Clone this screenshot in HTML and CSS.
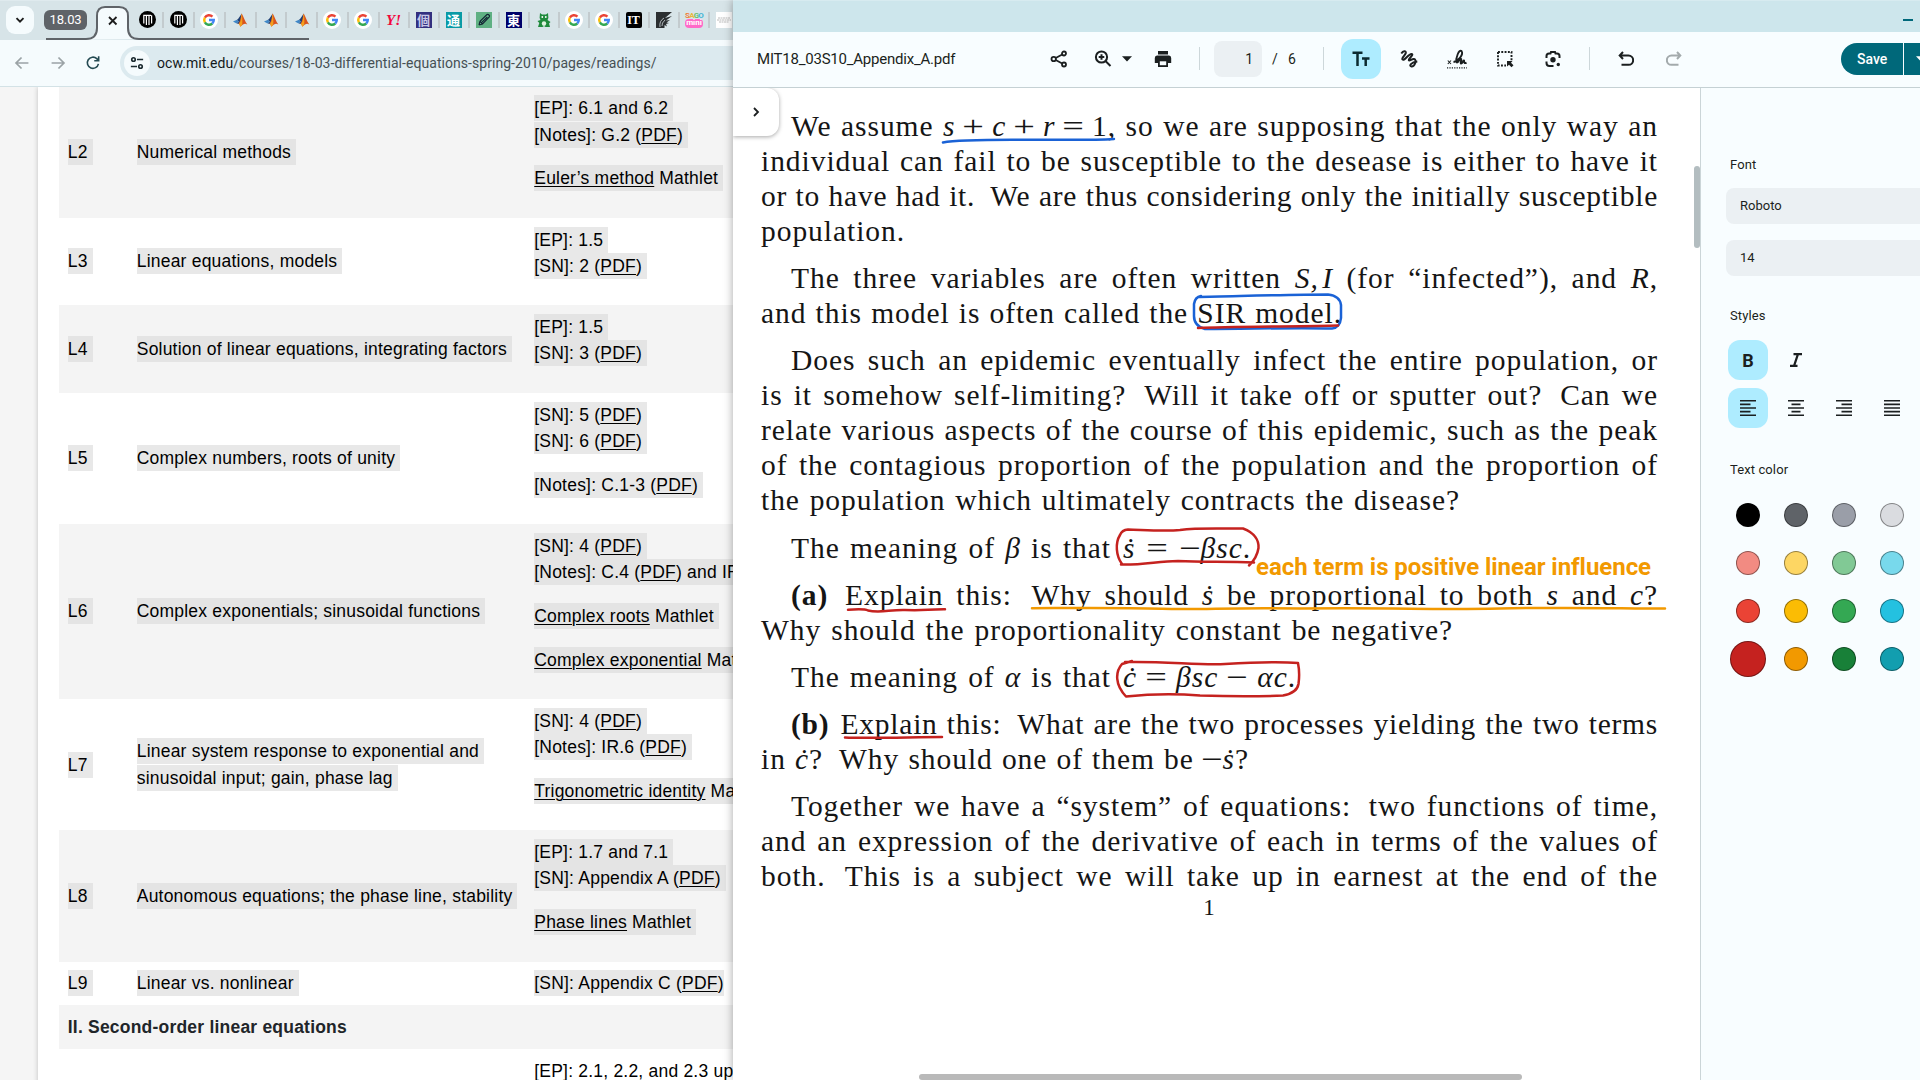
FILE: index.html
```html
<!DOCTYPE html>
<html lang="en">
<head>
<meta charset="utf-8">
<title>MIT18_03S10_Appendix_A.pdf</title>
<link rel="stylesheet" href="styles.css">
</head>
<body>
<svg class="defs" aria-hidden="true">
  <symbol id="google" viewBox="0 0 20 20"><circle cx="10" cy="10" r="10" fill="#fff"/><g fill="none" stroke-width="2.7"><path d="M5.4 7.4A5.3 5.3 0 0 1 13.8 6.3" stroke="#ea4335"/><path d="M5.4 12.6A5.3 5.3 0 0 1 5.4 7.4" stroke="#fbbc05"/><path d="M13.6 13.9A5.3 5.3 0 0 1 5.4 12.6" stroke="#34a853"/><path d="M10 10H15.3A5.3 5.3 0 0 1 13.6 13.9" stroke="#4285f4"/></g></symbol>
  <symbol id="matlab" viewBox="0 0 16 16"><path d="M1 9.5L5 7.8L7 9.8L4.5 11.5Z" fill="#3f87c7"/><path d="M5 7.8C6.5 7 7.5 4.5 9.7 1.5L9 9L6.5 12L4.7 11.3L7 9.8Z" fill="#1f3f73"/><path d="M9.7 1.5C11.5 4.5 13 9.5 15.3 12.5C13 11 11.5 11.5 8.3 14.8C8 13 7.4 12 6.5 11.5C8.5 9.5 8.5 5 9.7 1.5Z" fill="#d9541e"/><path d="M9.7 1.5C10.4 5 10.5 9 10.2 12.8L8.3 14.8L7 12C9 10 9.2 5 9.7 1.5Z" fill="#f3a01c"/></symbol>
  <symbol id="ocw" viewBox="0 0 17 17"><circle cx="8.5" cy="8.5" r="8.5" fill="#000"/><path d="M4.8 12.500V4.200M7.400 4.200V14M10 4.200V14M12.600 12.500V4.200M4.200 4.300H12" stroke="#fff" stroke-width="1.200" fill="none"/></symbol>
</svg>

<main class="desktop">
  <section class="browser">
    <header class="tabstrip">
      <button class="tab-search"><svg viewBox="0 0 12 12" width="12" height="12"><path d="M2.5 4.2L6 7.7L9.5 4.2" fill="none" stroke="#1d1d1d" stroke-width="1.9"/></svg></button>
      <span class="group">18.03</span>
      <div class="active-tab">
        <svg viewBox="0 0 274 34" width="274" height="34"><path d="M12 34C18 33 50 36 53 32C59 30 59 25 59 20V10Q59 1 67 1H81Q90 1 90 10V20C90 28 93 33 101 33Z" fill="#f5fbfd"/><path d="M8 33H48Q59 33 59 22V10Q59 1 67 1H81Q90 1 90 10V22Q90 33 101 33H271" fill="none" stroke="#5f6368" stroke-width="2"/><path d="M71 11L78.5 18.5M78.5 11L71 18.500" stroke="#1d1d1d" stroke-width="1.8"/></svg>
      </div>
      <div class="tabs">
        <i class="tab wide"><svg width="17" height="17"><use href="#ocw"/></svg></i>
        <i class="tab wide"><svg width="17" height="17"><use href="#ocw"/></svg></i>
        <i class="tab wide"><svg width="18" height="18"><use href="#google"/></svg></i>
        <i class="tab wide"><svg width="16" height="16"><use href="#matlab"/></svg></i>
        <i class="tab wide"><svg width="16" height="16"><use href="#matlab"/></svg></i>
        <i class="tab wide"><svg width="16" height="16"><use href="#matlab"/></svg></i>
        <i class="tab wide"><svg width="18" height="18"><use href="#google"/></svg></i>
        <i class="tab wide"><svg width="18" height="18"><use href="#google"/></svg></i>
        <i class="tab"><b class="yahoo">Y!</b></i>
        <i class="tab"><b class="fav indigo">個</b></i>
        <i class="tab"><b class="fav teal">通</b></i>
        <i class="tab"><svg viewBox="0 0 16 16" width="16" height="16"><rect width="16" height="16" fill="#5fb083"/><path d="M3 13L4 9.3L11 2.5Q12 2 13 3Q14 4 13.3 5L6.5 12L3 13M4 9.3L6.5 12M5.5 10.7L11.3 5" fill="none" stroke="#123" stroke-width="1.1"/></svg></i>
        <i class="tab"><b class="fav navy">東</b></i>
        <i class="tab"><svg viewBox="0 0 16 16" width="16" height="16"><path d="M4 1L6 2.5H10L12 1L12.4 6L11.5 8L14.5 10L13 11.5L14 15H9.5L8 14L6.5 15H2L3.3 11L1.5 9L4.5 8L3.6 6Z" fill="#1f8a3c"/><circle cx="6.3" cy="5" r=".9" fill="#fff"/><circle cx="9.8" cy="5" r=".9" fill="#fff"/><ellipse cx="8" cy="11.6" rx="2.2" ry="2.4" fill="#dff3e0"/></svg></i>
        <i class="tab"><svg width="18" height="18"><use href="#google"/></svg></i>
        <i class="tab"><svg width="18" height="18"><use href="#google"/></svg></i>
        <i class="tab"><b class="fav it">IT</b></i>
        <i class="tab"><svg viewBox="0 0 16 16" width="16" height="16"><path d="M0 0H16L9 6L16 4L10 8.5L14 8L10.5 10.5L13 11L10 12L11 14.5L8.5 13V16H0Z" fill="#2b2f31"/><path d="M4 15Q3 9 8 6M6 14Q5.500 11 9 8" stroke="#cfd8dc" stroke-width=".8" fill="none"/></svg></i>
        <i class="tab"><b class="sago"><span><em class="o">S</em><em class="y">A</em><em class="g">G</em><em class="b">O</em></span><span class="mini">mini</span></b></i>
        <i class="tab"><svg viewBox="0 0 16 16" width="16" height="16"><rect width="16" height="16" fill="#fff"/><path d="M2 6H14M1 8H15M3 10H13" stroke="#bbb" stroke-width="1" stroke-dasharray="2 .5"/></svg></i>
      </div>
    </header>
    <nav class="navbar">
      <svg viewBox="0 0 24 24" width="22" height="22" class="dim"><path d="M19 12H6M11.500 6L5.500 12L11.500 18"/></svg>
      <svg viewBox="0 0 24 24" width="22" height="22" class="dim"><path d="M5 12H18M12.500 6L18.500 12L12.500 18"/></svg>
      <svg viewBox="0 0 24 24" width="20" height="20" class="reload"><path d="M18.500 13A6.700 6.700 0 1 1 16.500 6.800L18.500 8.800M18.800 4V9.200H13.500"/></svg>
      <div class="omnibox">
        <span class="site"><svg viewBox="0 0 16 16" width="14" height="14" fill="none" stroke="#1c2b30"><circle cx="4" cy="4" r="2"/><path d="M8 4H15M1 12H8"/><circle cx="12" cy="12" r="2"/></svg></span>
        <span class="url"><b>ocw.mit.edu</b>/courses/18-03-differential-equations-spring-2010/pages/readings/</span>
      </div>
    </nav>
    <div class="page">
      <div class="sheet">
        <div class="row odd"><div><mark>L2 </mark></div><div><mark>Numerical methods </mark></div><div><p><mark>[EP]: 6.1 and 6.2 </mark><br><mark>[Notes]: G.2 (<a>PDF</a>) </mark></p><p><mark><a>Euler’s method</a> Mathlet </mark></p></div></div>
        <div class="row"><div><mark>L3 </mark></div><div><mark>Linear equations, models </mark></div><div><p><mark>[EP]: 1.5 </mark><br><mark>[SN]: 2 (<a>PDF</a>) </mark></p></div></div>
        <div class="row odd"><div><mark>L4 </mark></div><div><mark>Solution of linear equations, integrating factors </mark></div><div><p><mark>[EP]: 1.5 </mark><br><mark>[SN]: 3 (<a>PDF</a>) </mark></p></div></div>
        <div class="row"><div><mark>L5 </mark></div><div><mark>Complex numbers, roots of unity </mark></div><div><p><mark>[SN]: 5 (<a>PDF</a>) </mark><br><mark>[SN]: 6 (<a>PDF</a>) </mark></p><p><mark>[Notes]: C.1-3 (<a>PDF</a>) </mark></p></div></div>
        <div class="row odd"><div><mark>L6 </mark></div><div><mark>Complex exponentials; sinusoidal functions </mark></div><div><p><mark>[SN]: 4 (<a>PDF</a>) </mark><br><mark>[Notes]: C.4 (<a>PDF</a>) and IR</mark></p><p><mark><a>Complex roots</a> Mathlet </mark></p><p><mark><a>Complex exponential</a> Mathlet </mark></p></div></div>
        <div class="row"><div><mark>L7 </mark></div><div><mark>Linear system response to exponential and </mark><br><mark>sinusoidal input; gain, phase lag </mark></div><div><p><mark>[SN]: 4 (<a>PDF</a>) </mark><br><mark>[Notes]: IR.6 (<a>PDF</a>) </mark></p><p><mark><a>Trigonometric identity</a> Mathlet </mark></p></div></div>
        <div class="row odd"><div><mark>L8 </mark></div><div><mark>Autonomous equations; the phase line, stability </mark></div><div><p><mark>[EP]: 1.7 and 7.1 </mark><br><mark>[SN]: Appendix A (<a>PDF</a>) </mark></p><p><mark><a>Phase lines</a> Mathlet </mark></p></div></div>
        <div class="row"><div><mark>L9 </mark></div><div><mark>Linear vs. nonlinear </mark></div><div><mark>[SN]: Appendix C (<a>PDF</a>)</mark></div></div>
        <div class="row odd heading"><div>II. Second-order linear equations</div></div>
        <div class="row"><div></div><div></div><div><p>[EP]: 2.1, 2.2, and 2.3 up</p></div></div>
      </div>
    </div>
  </section>

  <section class="viewer">
    <div class="titlebar"><span class="minimise"></span></div>
    <header class="toolbar">
      <span class="filename">MIT18_03S10_Appendix_A.pdf</span>
      <div class="tools">
        <svg class="t-share" viewBox="0 0 18 18" width="18" height="18" fill="none" stroke="#1b1f20" stroke-width="1.800"><circle cx="14" cy="3.500" r="2"/><circle cx="14" cy="14.500" r="2"/><circle cx="3.700" cy="9" r="2.200"/><path d="M5.700 8L12.200 4.500M5.700 10L12.200 13.500"/></svg>
        <svg class="t-zoom" viewBox="0 0 18 18" width="18" height="18" fill="none" stroke="#1b1f20" stroke-width="2"><circle cx="7.500" cy="7" r="5.600"/><path d="M11.700 11.200L16.500 16M4.700 7H10.300M7.500 4.200V9.800"/></svg>
        <svg class="t-caret" viewBox="0 0 10 6" width="10" height="6"><path d="M0 .3H10L5 5.500Z" fill="#1b1f20"/></svg>
        <svg class="t-print" viewBox="0 0 18 18" width="18" height="18"><path d="M4 1H14V4.500H4ZM3 5.500H15Q17.200 5.500 17.200 8V13H14V17H4V13H.8V8Q.8 5.500 3 5.500Z" fill="#1b1f20"/><path d="M5.800 11.300H12.200V15.200H5.800Z" fill="#f8fdff"/></svg>
        <span class="rule t-r1"></span>
        <span class="pageno">1</span><span class="slash">/</span><span class="total">6</span>
        <span class="rule t-r2"></span>
        <span class="chip t-text"><svg viewBox="0 0 18 16" width="18" height="16"><path d="M.5 1.800H10.500M5.500 1.800V15M10 7.500H17.500M13.700 7.500V15" fill="none" stroke="#0b2a31" stroke-width="2.500"/></svg></span>
        <svg class="t-draw" viewBox="0 0 18 18" width="18" height="18" fill="none" stroke="#1b1f20" stroke-width="2"><path d="M1.300 3.500C3 1 6.300 .3 5.800 3C5.200 5.500 1.500 7.500 2.400 9.300C4.500 11.500 8 4 11.500 4C14.500 4.500 8.300 8.600 8.800 10.200C9.500 11.500 12 8.600 14 9C17.500 10 14.500 16.800 11.500 16.600C8.500 16 11 12.300 17.300 11.600"/></svg>
        <svg class="t-sign" viewBox="0 0 20 20" width="20" height="20" fill="none" stroke="#1b1f20"><path d="M.8 11.500L4 15M4 11.500L.8 15" stroke-width="1.100"/><path d="M6.500 13C11 12.500 17 5.500 14.500 2C12 0 8.500 9 9.500 13C10.500 15.500 13 8.500 14.200 10C14.800 11.500 12.800 14.500 14.200 14.600C16 14.500 16 10.500 17 11.500C17 13.500 17.500 14.800 19.500 13.600" stroke-width="1.900"/><path d="M0 18.800H20" stroke-width="1.200" stroke-dasharray="1.200 1.200"/></svg>
        <svg class="t-select" viewBox="0 0 18 18" width="18" height="18"><path d="M2 2H15.500V11M2 2V15.500H10" fill="none" stroke="#1b1f20" stroke-width="1.900" stroke-dasharray="1.900 1.400"/><path d="M11 11H16.500L15 12.700L17.500 15.200L15.500 17.200L13 14.700L11 16.500Z" fill="#1b1f20"/></svg>
        <svg class="t-lens" viewBox="0 0 18 18" width="18" height="18" fill="none" stroke="#1b1f20" stroke-width="2"><path d="M2.500 8V6Q2.500 3.500 5 3.500H6.500L7 2H11L11.500 3.500H13Q15.500 3.500 15.500 6V8M2.500 11.500V13Q2.500 16 5.500 16H9.500"/><circle cx="9" cy="9.800" r="2.700" fill="#1b1f20" stroke="none"/><circle cx="14.300" cy="14.500" r="1.700" fill="#1b1f20" stroke="none"/></svg>
        <span class="rule t-r3"></span>
        <svg class="t-undo" viewBox="0 0 16 16" width="16" height="16" fill="none" stroke="#1b1f20" stroke-width="2"><path d="M5 1L1.700 4.500L5 8M2 4.500H10.500A4.400 4.400 0 0 1 10.500 13.800H3.500"/></svg>
        <svg class="t-redo" viewBox="0 0 16 16" width="16" height="16" fill="none" stroke="#a3aaac" stroke-width="2"><path d="M11 1L14.300 4.500L11 8M14 4.500H5.500A4.400 4.400 0 0 0 5.500 13.800H12.500"/></svg>
        <span class="save">Save</span><span class="save-more"><svg viewBox="0 0 10 6" width="10" height="6"><path d="M0 .3H10L5 5.500Z" fill="#fff"/></svg></span>
      </div>
    </header>
    <div class="body">
      <div class="document">
        <article class="pdf">
          <div class="para">
            <div class="ln first">We assume <span class="fit w172"><i>s</i> <s>+</s> <i>c</i> <s>+</s> <i>r</i> <s>=</s> 1,</span> so we are supposing that the only way an</div>
            <div class="ln">individual can fail to be susceptible to the desease is either to have it</div>
            <div class="ln tight">or to have had it. &#8201;We are thus considering only the initially susceptible</div>
            <div class="ln"><span class="fit w144">population.</span></div>
          </div>
          <div class="para">
            <div class="ln first">The three variables are often written <i>S,&#8202;I</i> (for “infected”), and <i>R</i>,</div>
            <div class="ln"><span class="fit w579">and this model is often called the SIR model.</span></div>
          </div>
          <div class="para">
            <div class="ln first">Does such an epidemic eventually infect the entire population, or</div>
            <div class="ln">is it somehow self-limiting? &#8201;Will it take off or sputter out? &#8201;Can we</div>
            <div class="ln">relate various aspects of the course of this epidemic, such as the peak</div>
            <div class="ln">of the contagious proportion of the population and the proportion of</div>
            <div class="ln"><span class="fit w698">the population which ultimately contracts the disease?</span></div>
          </div>
          <div class="para">
            <div class="ln first left"><span class="fit w319">The meaning of <i>β</i> is that</span><span class="fit eq w127"><i>ṡ</i> <s>=</s> <s>−</s><i>βsc</i>.</span></div>
          </div>
          <div class="para">
            <div class="ln first"><b>(a)</b> Explain this: &#8201;Why should <i>ṡ</i> be proportional to both <i>s</i> and <i>c</i>?</div>
            <div class="ln"><span class="fit w691">Why should the proportionality constant be negative?</span></div>
          </div>
          <div class="para">
            <div class="ln first left"><span class="fit w319">The meaning of <i>α</i> is that</span><span class="fit eq w172"><i>ċ</i> <s>=</s> <i>βsc</i> <s>−</s> <i>αc</i>.</span></div>
          </div>
          <div class="para">
            <div class="ln first tight"><b>(b)</b> Explain this: &#8201;What are the two processes yielding the two terms</div>
            <div class="ln"><span class="fit w488">in <i>ċ</i>? &#8201;Why should one of them be <s>−</s><i>ṡ</i>?</span></div>
          </div>
          <div class="para">
            <div class="ln first">Together we have a “system” of equations: &#8201;two functions of time,</div>
            <div class="ln">and an expression of the derivative of each in terms of the values of</div>
            <div class="ln">both. &#8201;This is a subject we will take up in earnest at the end of the</div>
          </div>
          <div class="folio">1</div>
        </article>
        <svg class="ink" viewBox="733 88 967 992" width="967" height="992">
          <g fill="none" stroke-width="2.500" stroke-linecap="round" stroke-linejoin="round">
            <path stroke="#1a62d6" d="M943 142.500C960 139.500 1000 140 1027 139.800S1090 140.500 1114 139"/>
            <path stroke="#1a62d6" d="M1199 297C1230 296.500 1290 294.500 1328 294.500Q1340 296 1341 305V318Q1340 328 1332 328.500C1290 327.500 1250 329 1205 329Q1194 326 1194 316V304Q1195 297 1201 296"/>
            <path stroke="#c5221f" d="M1198 328C1230 326.500 1310 326.500 1338 325.500"/>
            <path stroke="#c5221f" d="M1121 564.500C1145 565 1158 561 1178 561C1205 562.500 1225 561 1254 562.500M1122 564C1116 556 1115 543 1120 535Q1122 530 1128 529.500C1145 530 1165 531.500 1180 530C1200 527.500 1225 529 1243 528.500C1255 533 1259 541 1258.500 548Q1257 558 1249 565.500"/>
            <path stroke="#c5221f" d="M848 609.800C858 609 864 608.500 868 610.500C880 613.500 890 609.500 905 610S930 610 945 609.300"/>
            <path stroke="#f29900" d="M1032 608.200C1080 608 1120 607.500 1162 608.800S1230 607 1300 608.500C1400 607.500 1430 610 1500 608.500S1620 608.500 1665 608.500"/>
            <path stroke="#c5221f" d="M1132 661L1122 664C1115 672 1115 685 1126 696.500C1145 694.500 1175 693.500 1200 695.500C1230 696.500 1260 696.500 1283 695.500Q1297 693 1298.500 684Q1300 673 1298 663C1280 661.500 1250 662.500 1225 664S1165 661 1125 662"/>
            <path stroke="#c5221f" d="M845 737.500C870 738.500 915 737 942 737"/>
          </g>
        </svg>
        <div class="note">each term is positive linear influence</div>
        <button class="expand"><svg viewBox="0 0 12 12" width="12" height="12"><path d="M4 2L8 6L4 10" fill="none" stroke="#1b1f20" stroke-width="1.800"/></svg></button>
        <span class="vbar"></span><span class="hbar"></span>
      </div>
      <aside class="side">
        <h4>Font</h4>
        <div class="select">Roboto</div>
        <div class="select second">14</div>
        <h4 class="h-styles">Styles</h4>
        <div class="btns">
          <span class="chip"><b>B</b></span><span class="chip off"><svg viewBox="0 0 14 14" width="14" height="14"><path d="M4.500 1.200H13M1 12.800H8.500M9 1L5 13" fill="none" stroke="#1b1f20" stroke-width="2.300"/></svg></span>
        </div>
        <div class="btns second">
          <span class="chip"><svg viewBox="0 0 16 16" width="16" height="16"><path d="M0 .8H16M0 4.400H10.500M0 8H16M0 11.600H10.500M0 15.200H16"/></svg></span>
          <span class="chip off"><svg viewBox="0 0 16 16" width="16" height="16"><path d="M0 .8H16M3.500 4.400H12.500M0 8H16M3.500 11.600H12.500M0 15.200H16"/></svg></span>
          <span class="chip off"><svg viewBox="0 0 16 16" width="16" height="16"><path d="M0 .8H16M5.500 4.400H16M0 8H16M5.500 11.600H16M0 15.200H16"/></svg></span>
          <span class="chip off"><svg viewBox="0 0 16 16" width="16" height="16"><path d="M0 .8H16M0 4.400H16M0 8H16M0 11.600H16M0 15.200H16"/></svg></span>
        </div>
        <h4 class="h-color">Text color</h4>
        <div class="swatches">
          <i style="background:#000"></i><i style="background:#5f6368"></i><i style="background:#9a9ea8"></i><i style="background:#dadce0"></i>
          <i style="background:#f28b82"></i><i style="background:#fdd663"></i><i style="background:#81c995"></i><i style="background:#78d9ec"></i>
          <i style="background:#ea4335"></i><i style="background:#fbbc04"></i><i style="background:#34a853"></i><i style="background:#24c1e0"></i>
          <i class="sel" style="background:#c5221f"></i><i style="background:#f29900"></i><i style="background:#188038"></i><i style="background:#129eaf"></i>
        </div>
      </aside>
    </div>
  </section>
</main>
</body>
</html>
```
FILE: styles.css
```css
* { box-sizing: border-box; }
body { margin: 0; overflow: hidden; font-family: Roboto, sans-serif; color: #1b1f20; }
button { border: 0; padding: 0; }
svg { display: block; flex: none; }
.defs { display: none; }
.desktop { display: grid; grid-template-columns: 733px 1187px; height: 1080px; width: 1920px; overflow: hidden; }

/* background browser */
.browser { overflow: hidden; display: flex; flex-direction: column; min-width: 0; }
.tabstrip { height: 40px; flex: none; display: flex; background: #d7e4e8; padding: 0 0 0 6px; border-top: 1px solid #dfeaee; position: relative; }
.tab-search { flex: none; width: 28px; height: 28px; margin-top: 5px; border-radius: 9px; background: #f5fbfd; display: grid; place-items: center; }
.group { flex: none; margin: 9px 0 0 10px; width: 43px; height: 20px; border-radius: 6px; background: #5f6368; color: #fff; font-size: 13px; letter-spacing: -.1px; line-height: 20px; text-align: center; z-index: 1; }
.active-tab { position: absolute; left: 38px; top: 5px; }
.tabs { flex: none; display: flex; margin-left: 45.500px; height: 38px; padding-top: 4px; z-index: 1; }
.tab { flex: none; width: 30px; height: 29px; display: grid; place-items: center; position: relative; font-style: normal; }
.tab.wide { width: 30.750px; }
.tab::after { content: ""; position: absolute; right: -1px; top: 7px; width: 2px; height: 16px; background: #c3cbce; }
.fav { width: 16px; height: 16px; color: #fff; font: 700 13px/16px "Noto Sans CJK JP", sans-serif; text-align: center; }
.indigo { background: #33307f; color: #c7c6e6; }
.teal { background: #0a9aa5; }
.navy { background: #00006a; }
.it { background: #000; font: 700 12px/16px "Liberation Serif", serif; border-radius: 2px; }
.yahoo { color: #f2083c; font: italic 700 15px/16px "Liberation Serif", serif; }
.sago { width: 17px; height: 17px; font: 700 8px/9px Roboto, sans-serif; letter-spacing: -.8px; text-align: center; display: grid; grid-template-rows: 8px 9px; }
.sago em { font-style: normal; }
.o { color: #f0803c; } .y { color: #e9b93a; } .g { color: #6bbf6a; } .b { color: #45b5d6; }
.mini { background: #ff69c8; color: #fff; border-radius: 4px; letter-spacing: 0; line-height: 8px; height: 9px; }

.navbar { height: 47px; flex: none; display: flex; align-items: center; background: #f5fbfd; border-bottom: 1px solid #d3e2e6; padding-left: 11px; gap: 14px; }
.navbar svg { fill: none; stroke-width: 1.900; }
.dim { stroke: #9ba3a6; }
.reload { stroke: #244a52; stroke-width: 2.400; }
.omnibox { flex: 1; height: 34px; margin-left: 3px; border-radius: 17px 0 0 17px; background: #dceaef; display: flex; align-items: center; padding-left: 4px; }
.site { width: 26px; height: 26px; border-radius: 13px; background: #f5fbfd; display: grid; place-items: center; }
.url { margin-left: 7px; font-size: 14px; letter-spacing: .05px; white-space: nowrap; color: #465054; }
.url b { font-weight: 400; color: #12191b; }

.page { flex: 1; background: #f5f5f5; padding-left: 38px; overflow: hidden; }
.sheet { background: #fff; width: 900px; height: 1000px; margin-top: -.4px; padding-left: 21px; box-shadow: 0 0 5px rgba(0,0,0,.22); font: 17.500px/26.250px "Liberation Sans", Arial, sans-serif; letter-spacing: .21px; color: #000; }
.row { display: grid; grid-template-columns: 69px 397.500px 400px; align-items: center; }
.row > div { padding: 8.750px; white-space: nowrap; }
.row p { margin: 0 0 17.500px; }
.odd { background: #f4f4f4; }
.row mark { background: #e8e8e8; color: #000; padding: 3px 0; white-space: pre; }
.row.odd mark { background: #e4e4e4; }
.row a { text-decoration: underline; text-underline-offset: 2px; text-decoration-thickness: 1px; }
.row.heading { grid-template-columns: 1fr; font-weight: 700; color: #212529; }

/* document viewer */
.viewer { display: flex; flex-direction: column; min-width: 0; position: relative; z-index: 2; box-shadow: 0 0 9px rgba(0,0,0,.35); background: #f8fdff; }
.titlebar { height: 32px; flex: none; background: #cde6ec; padding: 18px 0 0 1170px; border-top: 1px solid #d7ebf0; }
.minimise { display: block; width: 10px; height: 2px; background: #00687a; }
.toolbar { height: 56px; flex: none; border-bottom: 1px solid #c5d1d4; display: flex; align-items: center; padding: 0 0 2px 24px; overflow: hidden; }
.filename { flex: none; width: 293px; font-size: 15px; letter-spacing: -.22px; }
.tools { display: flex; align-items: center; flex: none; }
.t-zoom { margin-left: 26px; }
.t-caret { margin-left: 10px; }
.t-print { margin-left: 22px; }
.rule { width: 1px; height: 23px; background: #cdd7da; }
.t-r1 { margin-left: 27px; }
.pageno { margin-left: 14px; width: 48px; height: 36px; border-radius: 8px; background: #ebf0f3; font-size: 14px; line-height: 36px; text-align: right; padding-right: 9px; }
.slash { margin-left: 10px; font-size: 14px; width: 14px; }
.total { font-size: 14px; width: 12px; margin-left: 2px; }
.t-r2 { margin-left: 23px; }
.chip { width: 40px; height: 40px; border-radius: 12px; background: #aeecff; display: grid; place-items: center; flex: none; }
.chip.off { background: none; }
.t-text { margin-left: 17px; }
.t-draw { margin-left: 19px; }
.t-sign { margin-left: 29px; }
.t-select { margin-left: 29px; }
.t-lens { margin-left: 30px; }
.t-r3 { margin-left: 27px; }
.t-undo { margin-left: 28px; }
.t-redo { margin-left: 32px; }
.save { margin-left: 159px; width: 62px; height: 32px; border-radius: 16px 0 0 16px; background: #00687a; color: #fff; font: 500 14px/32px Roboto, sans-serif; padding-left: 16px; }
.save-more { margin-left: 1px; width: 30px; height: 32px; background: #00687a; display: flex; align-items: center; padding-left: 12px; }

.body { flex: 1; display: grid; grid-template-columns: 968px 219px; min-height: 0; }
.document { position: relative; background: #fff; border-right: 1px solid #cbd5d8; overflow: hidden; }
.pdf { padding: 21px 0 0 28px; width: 926px; font: 29.500px/35px "Liberation Serif", serif; letter-spacing: .95px; color: #151515; }
.para { margin-bottom: 12.200px; }
.ln { height: 35px; width: 897px; text-align: justify; text-align-last: justify; }
.ln.first { padding-left: 30px; }
.ln.left { text-align-last: left; }
.ln.tight { letter-spacing: .75px; }
.ln b { margin-right: 4px; }
.ln.tight b { margin-right: 2px; }
.pdf s { display: inline-block; text-decoration: none; transform: scaleX(1.3); margin: 0 1px; }
.fit { display: inline-block; text-align: justify; text-align-last: justify; height: 35px; }
.eq { margin-left: 12px; }
.w127 { width: 128px; } .w144 { width: 144px; } .w172 { width: 173px; } .w319 { width: 320px; }
.w488 { width: 488px; } .w579 { width: 581px; } .w691 { width: 692px; } .w698 { width: 699px; }
.folio { font-size: 23px; line-height: 30px; margin: -14px 0 0; text-align: center; width: 897px; }
.ink { position: absolute; left: 0; top: 0; }
.note { position: absolute; left: 523px; top: 464px; font: 700 24px/30px Roboto, sans-serif; letter-spacing: -.05px; color: #f29900; white-space: nowrap; }
.expand { position: absolute; left: 0; top: 0; width: 46px; height: 48px; border-radius: 0 12px 12px 0; background: #fff; box-shadow: 0 1px 4px rgba(0,0,0,.35); display: grid; place-items: center; }
.vbar { position: absolute; right: 0; top: 78px; width: 6px; height: 82px; border-radius: 3px; background: #b3bdc0; }
.hbar { position: absolute; left: 186px; bottom: 0; width: 603px; height: 6px; border-radius: 3px; background: #b9b9b9; }

.side { padding: 68px 0 0 25px; overflow: hidden; }
.side h4 { margin: 0 0 0 4px; font: 400 13px/18px Roboto, sans-serif; letter-spacing: .1px; }
.select { margin-top: 14px; height: 36px; border-radius: 8px; background: #ebf0f3; padding-left: 14px; font-size: 13px; line-height: 36px; width: 240px; }
.select.second { margin-top: 16px; }
.side .h-styles { margin-top: 31px; }
.btns { display: flex; gap: 8px; margin: 15px 0 0 2px; width: 240px; }
.btns.second { margin-top: 8px; }
.btns b { font-size: 18px; }
.btns svg { stroke: #1b1f20; stroke-width: 1.600; }
.side .h-color { margin-top: 33px; }
.swatches { display: grid; grid-template-columns: repeat(4, 48px); grid-auto-rows: 48px; place-items: center; margin: 12px 0 0 -2px; }
.swatches i { width: 24px; height: 24px; border-radius: 50%; border: 1px solid rgba(0,0,0,.4); }
.swatches .sel { width: 36px; height: 36px; }
```
